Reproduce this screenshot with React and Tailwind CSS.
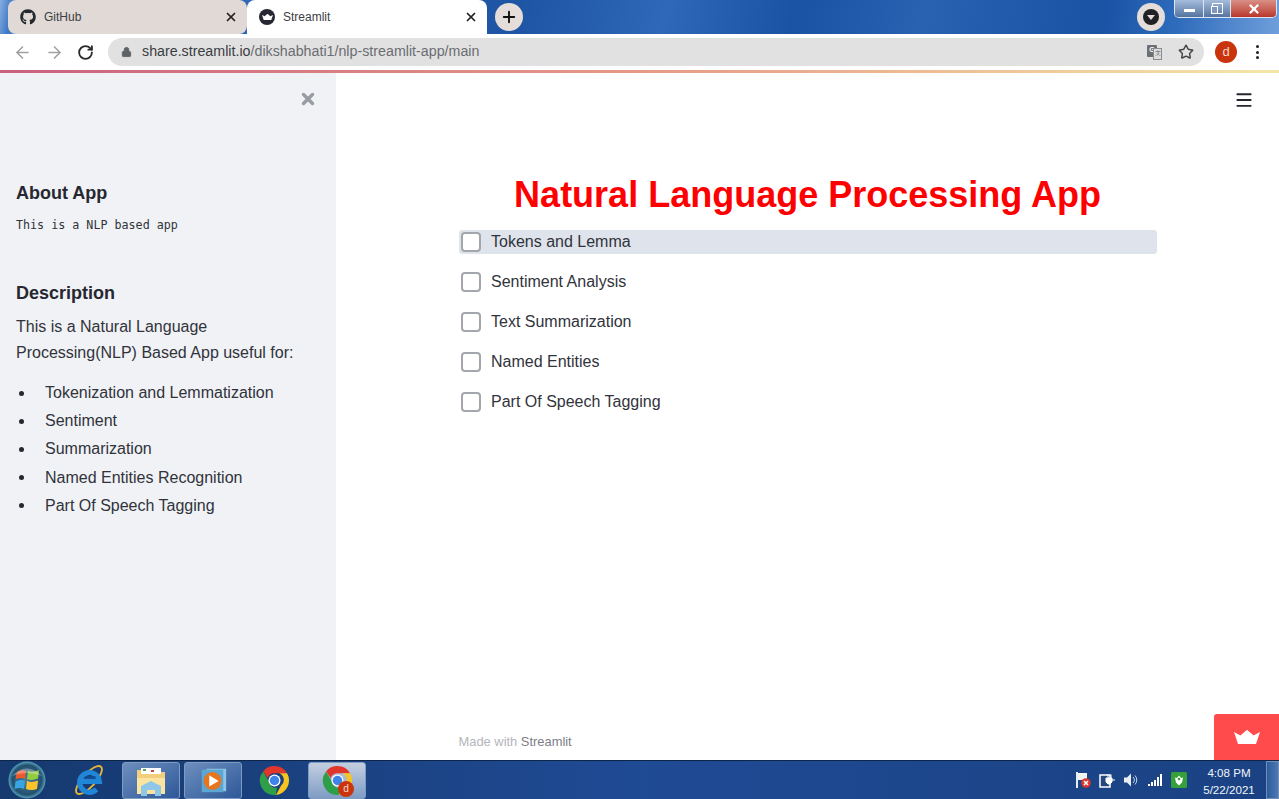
import React from "react";
import { FaGithub } from "react-icons/fa";
import { ArrowLeft, ArrowRight, RotateCw, Lock, Star, X, Plus, Menu } from "lucide-react";

const Crown = ({ className, fill = "#fff" }) => (
  <svg viewBox="0 0 26 14" className={className}>
    <path d="M0 2 L6.500 5.500 L13 0 L19.500 5.500 L26 2 L22 14 L4 14 Z" fill={fill} />
    <path d="M6.500 5.500 L13 14 L19.500 5.500 L13 0 Z" fill="#fff" opacity="0.75" />
  </svg>
);

const ChromeLogo = ({ className }) => (
  <svg viewBox="0 0 32 32" className={className}>
    <path d="M16 1a15 15 0 0 1 13 7.500H16a7.500 7.500 0 0 0-7 4.800L4.200 6.600A15 15 0 0 1 16 1z" fill="#e0362c" />
    <path d="M29 8.500a15 15 0 0 1-11.500 22.400L23 21a7.500 7.500 0 0 0-1.800-12.500z" fill="#f7c51e" />
    <path d="M17.500 30.900A15 15 0 0 1 4.200 6.600L10 16.500a7.500 7.500 0 0 0 8.500 7z" fill="#2f9e49" />
    <circle cx="16" cy="16" r="6.200" fill="#fff" />
    <circle cx="16" cy="16" r="4.900" fill="#3f82ea" />
  </svg>
);

const WinOrb = () => (
  <svg viewBox="0 0 38 38" className="w-[38px] h-[38px]">
    <defs>
      <radialGradient id="orb" cx="50%" cy="50%" r="55%">
        <stop offset="0" stopColor="#4a7f9c" />
        <stop offset="0.72" stopColor="#23506f" />
        <stop offset="0.92" stopColor="#5aa6bf" />
        <stop offset="1" stopColor="#b5e3ee" />
      </radialGradient>
    </defs>
    <circle cx="19" cy="19" r="18.500" fill="url(#orb)" />
    <path d="M9 11 Q13 8 18 10 L17 18 Q13 16 7.500 18.500 Z" fill="#ef5a2a" />
    <path d="M20 10 Q25 12 31 9 L30 17.500 Q24 20 19 18 Z" fill="#92cc41" />
    <path d="M7.500 20.500 Q13 18 17 20 L16 28 Q12 26 6.500 28 Z" fill="#37a5e2" />
    <path d="M19 20 Q24 22 30 19.500 L29 28 Q23 30 18 28 Z" fill="#fcc42c" />
    <path d="M4 15 Q19 0 34 15 Q19 9 4 15Z" fill="#fff" opacity="0.3" />
  </svg>
);

const IeLogo = () => (
  <svg viewBox="0 0 34 34" className="w-[32px] h-[32px]">
    <ellipse cx="17" cy="17" rx="19" ry="7" transform="rotate(-48 17 17)" fill="none" stroke="#e2b53a" strokeWidth="2" />
    <path d="M8 18.500h20a10.500 10.500 0 1 0-3 8.500" fill="none" stroke="#1f86d8" strokeWidth="5.500" />
    <path d="M13 14h11" stroke="#0f4f96" strokeWidth="2" />
  </svg>
);

const Folder = () => (
  <svg viewBox="0 0 32 32" className="w-[32px] h-[32px]">
    <path d="M2 6h11l2 2h15v22H2z" fill="#f3cf7c" />
    <rect x="6" y="4" width="20" height="6" fill="#fff" />
    <rect x="8" y="5" width="3" height="2" fill="#5aa84a" />
    <rect x="16" y="6" width="3" height="2" fill="#c94a3a" />
    <path d="M2 14h28v16H2z" fill="#fbe3a0" />
    <path d="M6 32V22l10-5 10 5v10h-6v-6h-8v6z" fill="#8ec7e8" />
  </svg>
);

const MediaPlayer = () => (
  <svg viewBox="0 0 32 32" className="w-[30px] h-[30px]">
    <rect x="9" y="4" width="21" height="24" fill="#8fc6e6" />
    <rect x="4" y="5" width="23" height="24" fill="#5ba6d2" />
    <circle cx="15.500" cy="17" r="9.500" fill="#e8741c" />
    <path d="M12 11l10 6-10 6z" fill="#fff" />
  </svg>
);

const TaskBtn = ({ children, active }) => (
  <div className={`relative flex items-center justify-center w-[58px] h-[37px] rounded-[3px] border border-[#7f9bc2] ${active ? "bg-gradient-to-b from-[#c3cfe0] to-[#7f9cc4]" : "bg-gradient-to-br from-[#6d8fbd] to-[#2e5899]"}`}>
    {children}
  </div>
);

const CheckRow = ({ label, hover }) => (
  <div className={`flex items-center h-6 rounded-[3px] pl-[2px] ${hover ? "bg-[#dfe3eb]" : ""}`}>
    <span className="w-5 h-5 rounded-[4px] border-2 border-[#a3a6ad] bg-white shrink-0" />
    <span className="ml-[10.500px] text-[16px] leading-6 text-[#31333b]">{label}</span>
  </div>
);

const Tab = ({ icon, label, active }) => (
  <div className={`flex items-center h-[34px] rounded-t-[8px] pl-[12px] pr-[9px] ${active ? "w-[240px] bg-white" : "w-[239px] bg-[#e0d9d5] rounded-b-[8px]"}`}>
    {icon}
    <span className="ml-[8px] flex-1 text-[12px] text-[#3c4043]">{label}</span>
    <X className="w-[14px] h-[14px] text-[#222]" strokeWidth={3} />
  </div>
);

const listItems = ["Tokenization and Lemmatization", "Sentiment", "Summarization", "Named Entities Recognition", "Part Of Speech Tagging"];
const options = ["Tokens and Lemma", "Sentiment Analysis", "Text Summarization", "Named Entities", "Part Of Speech Tagging"];

export default function App() {
  return (
    <div className="w-[1279px] h-[799px] flex flex-col overflow-hidden font-['Liberation_Sans',Arial,sans-serif] bg-white">
      {/* Title bar with tabs */}
      <div className="h-[34px] flex items-start pl-[8px] bg-[linear-gradient(100deg,#86aee0_0%,#3f78c4_1%,#1d54a3_40%,#2f68b8_52%,#1a52a4_62%,#2a62b2_72%,#1a52a4_86%,#2f6cbc_92%,#6f9fdc_100%)] shrink-0 relative">
        <Tab label="GitHub" icon={<FaGithub className="w-[16px] h-[16px] text-[#24292e]" />} />
        <Tab active label="Streamlit" icon={
          <span className="w-[16px] h-[16px] rounded-full bg-[#262730] flex items-center justify-center">
            <Crown className="w-[11px] h-[6px]" />
          </span>
        } />
        <div className="ml-[8px] mt-[3px] w-[28px] h-[28px] rounded-full bg-[#e4ddd9] flex items-center justify-center">
          <Plus className="w-[18px] h-[18px] text-[#111]" strokeWidth={2.500} />
        </div>
        <div className="ml-auto mt-[3px] w-[28px] h-[28px] rounded-full bg-[#e4ddd9] flex items-center justify-center">
          <span className="w-[16px] h-[16px] rounded-full bg-[#202124] flex items-center justify-center">
            <span className="w-0 h-0 border-x-[4px] border-x-transparent border-t-[5px] border-t-[#e4ddd9] mt-[1px]" />
          </span>
        </div>
        <div className="ml-[9px] mr-[2px] w-[103px] h-[18px] flex rounded-b-[5px] border border-t-0 border-[#dbe6f4] overflow-hidden">
          <div className="w-[29px] border-r border-[#dbe6f4] bg-gradient-to-b from-[#a6bedd] to-[#55749f] flex items-center justify-center">
            <span className="w-[11px] h-[3px] mt-[3px] bg-white" />
          </div>
          <div className="w-[27px] border-r border-[#dbe6f4] bg-gradient-to-b from-[#a6bedd] to-[#55749f] flex items-center justify-center">
            <span className="relative w-[11px] h-[11px] border-[1.500px] border-white">
              <span className="absolute -left-[1.500px] top-[1.500px] w-[7px] h-[8px] border-[1.500px] border-white bg-[#7f98bb]" />
            </span>
          </div>
          <div className="flex-1 bg-gradient-to-b from-[#d98f87] to-[#b8352a] flex items-center justify-center">
            <X className="w-[14px] h-[14px] text-white" strokeWidth={4} />
          </div>
        </div>
      </div>

      {/* Toolbar */}
      <div className="h-[36px] flex items-center bg-white shrink-0">
        <ArrowLeft className="ml-[13px] w-[19px] h-[19px] text-[#9fa1a4]" strokeWidth={2} />
        <ArrowRight className="ml-[13px] w-[19px] h-[19px] text-[#9fa1a4]" strokeWidth={2} />
        <RotateCw className="ml-[13px] w-[17px] h-[17px] text-[#2b2b2b]" strokeWidth={2.600} />
        <div className="ml-[14px] w-[1096px] h-[28px] rounded-full bg-[#e1e1e1] flex items-center pl-[13px] pr-[10px]">
          <Lock className="w-[11px] h-[12px] text-[#5f6368]" fill="#5f6368" strokeWidth={2} />
          <span className="ml-[10px] text-[14.250px] text-[#3a3d41]">share.streamlit.io<span className="text-[#6a6d71]">/dikshabhati1/nlp-streamlit-app/main</span></span>
          <div className="ml-auto relative w-[15px] h-[15px]">
            <span className="absolute left-0 top-0 w-[10px] h-[12px] bg-[#6d6f73] rounded-[1px] flex items-center justify-center text-[7px] font-bold text-white">G</span>
            <span className="absolute left-[6px] top-[3px] w-[9px] h-[12px] bg-[#dcdcdc] border border-[#8a8c90] flex items-center justify-center text-[6px] text-[#666]">文</span>
          </div>
          <Star className="ml-[16px] w-[16px] h-[16px] text-[#444]" strokeWidth={2.200} />
        </div>
        <div className="ml-[11px] w-[22px] h-[22px] rounded-full bg-[#c9340c] flex items-center justify-center text-[13px] text-[#f5d9cf]">d</div>
        <div className="ml-[19px] flex flex-col gap-[2.500px]">
          <span className="w-[3px] h-[3px] rounded-full bg-[#222]" />
          <span className="w-[3px] h-[3px] rounded-full bg-[#222]" />
          <span className="w-[3px] h-[3px] rounded-full bg-[#222]" />
        </div>
      </div>

      {/* Streamlit decoration line */}
      <div className="h-[3px] shrink-0 bg-gradient-to-r from-[#c9617f] via-[#e59a86] to-[#f3e6a8]" />

      {/* Page */}
      <div className="flex-1 min-h-0 flex relative">
        <aside className="w-[336px] shrink-0 bg-[#f0f2f6] px-4 flex flex-col text-[#31333b]">
          <div className="flex justify-end pr-[3px] pt-[17px]">
            <X className="w-[18px] h-[18px] text-[#9a9ca3]" strokeWidth={4.500} />
          </div>
          <h2 className="mt-[72px] text-[18px] leading-[26px] font-bold text-[#262730]">About App</h2>
          <p className="mt-[10px] text-[11.700px] leading-[18px] font-['DejaVu_Sans_Mono',monospace]">This is a NLP based app</p>
          <h2 className="mt-[46px] text-[18px] leading-[26px] font-bold text-[#262730]">Description</h2>
          <p className="mt-[8px] text-[16px] leading-[26px] w-[290px]">This is a Natural Language Processing(NLP) Based App useful for:</p>
          <ul className="mt-[13px] text-[16px] leading-[28.200px]">
            {listItems.map((t) => (
              <li key={t} className="flex items-center">
                <span className="ml-[3px] w-[5px] h-[5px] rounded-full bg-[#262730] shrink-0" />
                <span className="ml-[21px]">{t}</span>
              </li>
            ))}
          </ul>
        </aside>

        <main className="flex-1 min-w-0 flex flex-col relative">
          <div className="absolute right-[25px] top-[17px]">
            <Menu className="w-[20px] h-[20px] text-[#262730]" strokeWidth={2.300} />
          </div>
          <div className="w-[698px] mx-auto flex-1 flex flex-col">
            <h1 className="mt-[99px] text-center text-[36px] leading-[46px] font-bold text-[#ff0000]">Natural Language Processing App</h1>
            <div className="mt-[12px] flex flex-col gap-4">
              {options.map((o, i) => <CheckRow key={o} label={o} hover={i === 0} />)}
            </div>
            <div className="mt-auto mb-[10px] text-[12.900px] leading-4 text-[#b3b5ba]">Made with <span className="text-[#7c7e85]">Streamlit</span></div>
          </div>
          <div className="absolute right-0 bottom-0 w-[65px] h-[46px] bg-[#ff4b4b] rounded-tl-[3px] flex items-center justify-center">
            <Crown className="w-[26px] h-[14px]" fill="#fff" />
          </div>
        </main>
      </div>

      {/* Taskbar */}
      <div className="h-[39px] shrink-0 flex items-center bg-gradient-to-r from-[#16396f] via-[#1f4a94] to-[#1a4283] border-t border-[#0d2548]">
        <div className="ml-[8px]"><WinOrb /></div>
        <div className="ml-[27px]"><IeLogo /></div>
        <div className="ml-[17px]"><TaskBtn><Folder /></TaskBtn></div>
        <div className="ml-[4px]"><TaskBtn><MediaPlayer /></TaskBtn></div>
        <div className="ml-[17px]"><ChromeLogo className="w-[31px] h-[31px]" /></div>
        <div className="ml-[18px]">
          <TaskBtn active>
            <ChromeLogo className="w-[31px] h-[31px]" />
            <span className="absolute left-[29px] top-[18px] w-[16px] h-[16px] rounded-full bg-[#c9340c] flex items-center justify-center text-[10px] leading-none text-[#f5d9cf]">d</span>
          </TaskBtn>
        </div>
        <div className="ml-auto flex items-center text-white">
          <svg viewBox="0 0 16 16" className="w-[16px] h-[16px]">
            <path d="M2 0v16" stroke="#fff" strokeWidth="1.800" />
            <path d="M3 1h9v7H3z" fill="#f2f2f2" />
            <circle cx="11" cy="11" r="4.800" fill="#d8352c" />
            <path d="M9 9l4 4M13 9l-4 4" stroke="#fff" strokeWidth="1.500" />
          </svg>
          <svg viewBox="0 0 16 16" className="ml-[8px] w-[16px] h-[16px]">
            <rect x="1" y="3" width="10" height="12" fill="#26487f" stroke="#fff" strokeWidth="1.500" />
            <path d="M7 6h6v4l-2 2H9L7 10zM9 2.500v3.500M12 2.500v3.500M13 8h3" fill="#fff" stroke="#fff" />
          </svg>
          <svg viewBox="0 0 16 16" className="ml-[8px] w-[16px] h-[16px]">
            <path d="M1 5.500h3l4-4v13l-4-4H1z" fill="#e8edf4" />
            <path d="M10 5a4 4 0 0 1 0 6M12 3.500a6.500 6.500 0 0 1 0 9" stroke="#c9d6e6" fill="none" />
          </svg>
          <svg viewBox="0 0 16 16" className="ml-[8px] w-[16px] h-[16px]">
            <rect x="1" y="12" width="2" height="2" fill="#fff" />
            <rect x="4" y="10" width="2" height="4" fill="#fff" />
            <rect x="7" y="8" width="2" height="6" fill="#fff" />
            <rect x="10" y="5" width="2" height="9" fill="#fff" />
            <rect x="13" y="2" width="2" height="12" fill="#fff" />
          </svg>
          <svg viewBox="0 0 16 16" className="ml-[8px] w-[16px] h-[16px]">
            <rect width="16" height="16" rx="1.500" fill="#37a03a" />
            <path d="M4 5.500l2 .500 2-2.500 2 2.500 2-.500-1 5-3 3-3-3z" fill="#fff" />
            <circle cx="8" cy="7" r="1.300" fill="#37a03a" />
          </svg>
          <div className="ml-[12px] w-[60px] pt-[1px] text-center text-[11.600px] leading-[17px] text-[#f1f5fb]">
            <div>4:08 PM</div>
            <div>5/22/2021</div>
          </div>
          <div className="ml-[7px] w-[13px] h-[38px] border border-[#6f8fb8] bg-gradient-to-r from-[#2d5c9e] to-[#4d78b0]" />
        </div>
      </div>
    </div>
  );
}
